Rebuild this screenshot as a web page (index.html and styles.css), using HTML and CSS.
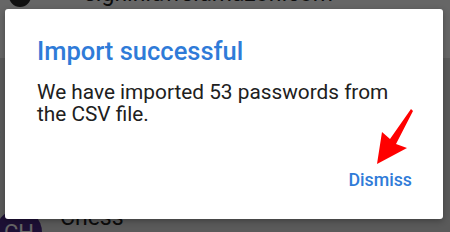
FILE: index.html
```html
<!DOCTYPE html>
<html>
<head>
<meta charset="utf-8">
<link rel="stylesheet" href="styles.css">
</head>
<body>
<div class="screen">
  <div class="list">
    <div class="row row-top">
      <div class="avatar avatar-dark"></div>
      <div class="row-text">signin.aws.amazon.com</div>
    </div>
    <div class="row row-mid">
      <div class="row-text row-text-cut">c</div>
    </div>
    <div class="row row-chess">
      <div class="avatar avatar-purple">CH</div>
      <div class="row-text">Chess</div>
    </div>
  </div>
  <div class="scrim"></div>
  <div class="dialog">
    <h1 class="title">Import successful</h1>
    <p class="message">We have imported 53 passwords from the CSV file.</p>
    <div class="actions">
      <button class="btn">Dismiss</button>
    </div>
  </div>
  <svg class="arrow" width="450" height="232" viewBox="0 0 450 232">
    <polygon points="377,164 382,132 390,139 411,109 413,111 396,144 407,148" fill="#ff0000"/>
  </svg>
</div>
</body>
</html>
```
FILE: styles.css
```css
html, body {
  margin: 0;
  padding: 0;
}
body {
  width: 450px;
  height: 232px;
  overflow: hidden;
  font-family: Roboto, "Noto Sans", sans-serif;
  background: #e2e2e2;
}
.screen {
  position: relative;
  width: 450px;
  height: 232px;
  overflow: hidden;
  background: #e2e2e2;
}
.list {
  display: flex;
  flex-direction: column;
  margin-top: -36px;
}
.row {
  display: flex;
  align-items: center;
  gap: 20px;
  padding-left: 5px;
}
.row-top {
  height: 94px;
  background: #ffffff;
}
.row-mid {
  height: 150px;
  padding-left: 0;
}
.row-chess {
  height: 60px;
  padding-left: 0;
}
.avatar {
  width: 40px;
  height: 40px;
  border-radius: 50%;
  flex: none;
  display: flex;
  align-items: center;
  justify-content: center;
  font-size: 22px;
  color: #ffffff;
}
.avatar-dark {
  background: #262626;
  width: 22px;
  height: 22px;
  align-self: flex-start;
  margin-top: 21px;
  margin-left: 4px;
  margin-right: 33px;
}
.avatar-purple {
  width: 46px;
  height: 46px;
  margin-left: -4px;
  background: #4a2a86;
  align-self: flex-start;
  margin-top: 1px;
}
.row-text {
  font-size: 23px;
  color: #202020;
  white-space: nowrap;
}
.row-top .row-text {
  align-self: flex-start;
  margin-top: 16px;
}
.row-text-cut {
  margin-left: -10px;
  font-size: 20px;
}
.row-chess .row-text {
  align-self: flex-start;
  margin-top: -4px;
  margin-left: -2px;
}
.scrim {
  position: absolute;
  inset: 0;
  background: rgba(0, 0, 0, 0.6);
}
.dialog {
  position: absolute;
  left: 5px;
  top: 9px;
  width: 438px;
  height: 210px;
  box-sizing: border-box;
  background: #ffffff;
  border-radius: 3px;
  box-shadow: 0 2px 6px rgba(0, 0, 0, 0.3);
  padding: 27px 31px 0 32px;
  display: flex;
  flex-direction: column;
}
.title {
  margin: 0;
  font-size: 25.5px;
  font-weight: 500;
  line-height: 30px;
  color: #2f7bd8;
}
.message {
  margin: 15px 0 0 0;
  font-size: 20.8px;
  line-height: 22px;
  color: #202020;
}
.actions {
  display: flex;
  justify-content: flex-end;
  margin-top: 44px;
}
.btn {
  border: none;
  background: none;
  padding: 0;
  margin: 0;
  font-family: Roboto, "Noto Sans", sans-serif;
  font-size: 17.8px;
  font-weight: 500;
  line-height: 21px;
  color: #2f7bd8;
}
.arrow {
  position: absolute;
  left: 0;
  top: 0;
}
```
